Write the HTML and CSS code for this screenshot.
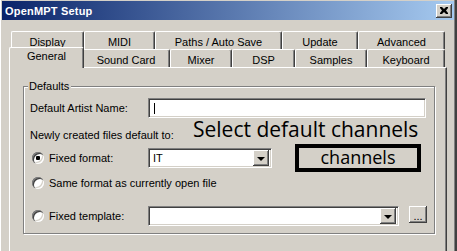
FILE: index.html
```html
<!DOCTYPE html>
<html lang="en">
<head>
    <meta charset="UTF-8">
    <title>OpenMPT Setup</title>
    <link rel="stylesheet" href="styles.css">
</head>
<body>
    <div class="window">
        <div class="titlebar">
            <span class="title">OpenMPT Setup</span>
            <div class="btn close">
                <svg width="8" height="7" viewBox="0 0 8 7"><path d="M0 0h2l2 2 2-2h2v1L6 3.5 8 6v1H6L4 5 2 7H0V6l2-2.5L0 1z" fill="#000"/></svg>
            </div>
        </div>

        <div class="tabs">
            <div class="tab-row">
                <div class="tab w-display">Display</div>
                <div class="tab w-midi">MIDI</div>
                <div class="tab w-paths">Paths / Auto Save</div>
                <div class="tab w-update">Update</div>
                <div class="tab w-advanced">Advanced</div>
            </div>
            <div class="tab-row">
                <div class="tab w-general active">General</div>
                <div class="tab w-sound">Sound Card</div>
                <div class="tab w-mixer">Mixer</div>
                <div class="tab w-dsp">DSP</div>
                <div class="tab w-samples">Samples</div>
                <div class="tab w-keyboard">Keyboard</div>
            </div>
        </div>

        <div class="panel">
            <fieldset class="group">
                <legend>Defaults</legend>

                <div class="row row-artist">
                    <span class="label">Default Artist Name:</span>
                    <div class="textbox artist"><span class="caret"></span></div>
                </div>

                <div class="row row-newly">
                    <span class="label">Newly created files default to:</span>
                    <span class="note">Select default channels</span>
                </div>

                <div class="row row-fixed">
                    <span class="label radio"><span class="radio-box checked"></span>Fixed format:</span>
                    <div class="textbox combo format">
                        <span class="combo-text">IT</span>
                        <div class="btn drop"><span class="arrow"></span></div>
                    </div>
                    <div class="callout">channels</div>
                </div>

                <div class="row row-same">
                    <span class="label radio wide"><span class="radio-box"></span>Same format as currently open file</span>
                </div>

                <div class="row row-template">
                    <span class="label radio"><span class="radio-box"></span>Fixed template:</span>
                    <div class="textbox combo template">
                        <span class="combo-text"></span>
                        <div class="btn drop"><span class="arrow"></span></div>
                    </div>
                    <div class="btn browse">...</div>
                </div>
            </fieldset>
        </div>
    </div>
</body>
</html>
```

FILE: styles.css
```css
:root {
    --face: #d4d0c8;
    --shadow: #808080;
    --dark: #404040;
    --light: #ffffff;
}

* {
    margin: 0;
    padding: 0;
    box-sizing: border-box;
}

body {
    background: var(--face);
    font-family: "Liberation Sans", Arial, sans-serif;
    font-size: 11px;
    color: #000;
    overflow: hidden;
}

.window {
    width: 457px;
    height: 251px;
    padding: 1px 3px 0 2px;
    background: var(--face);
    box-shadow: inset 1px 0 0 var(--light), inset -2px 0 0 var(--dark), inset -3px 0 0 var(--shadow);
    overflow: hidden;
}

/* raised 3D button */
.btn {
    display: flex;
    align-items: center;
    justify-content: center;
    flex-shrink: 0;
    background: var(--face);
    box-shadow: inset -1px -1px 0 var(--dark), inset 1px 1px 0 var(--light), inset -2px -2px 0 var(--shadow);
}

.titlebar {
    height: 19px;
    display: flex;
    align-items: center;
    justify-content: space-between;
    padding: 0 2px 0 3px;
    background: linear-gradient(to right, #0a246a, #a6caf0);
}

.title {
    color: #fff;
    font-weight: bold;
    font-size: 11px;
    letter-spacing: 0.2px;
}

.close {
    width: 16px;
    height: 14px;
}

.tabs {
    margin: 11px 0 0 9px;
}

.tab-row {
    display: flex;
    height: 18px;
}

.tab {
    height: 18px;
    border: 1px solid var(--light);
    border-right-color: var(--dark);
    border-bottom: none;
    border-radius: 2px 2px 0 0;
    box-shadow: inset -1px 0 0 var(--shadow);
    text-align: center;
    line-height: 20px;
    background: var(--face);
}

.tab.active {
    position: relative;
    z-index: 1;
    height: 21px;
    margin: -2px -2px 0 -2px;
    line-height: 17px;
}

.w-display { width: 73px; }
.w-midi { width: 71px; }
.w-paths { width: 127px; }
.w-update { width: 76px; }
.w-advanced { width: 87px; }
.w-general { width: 75px; }
.w-sound { width: 88px; }
.w-mixer { width: 62px; }
.w-dsp { width: 63px; }
.w-samples { width: 72px; }
.w-keyboard { width: 78px; }

.panel {
    margin-left: 7px;
    width: 438px;
    height: 200px;
    border-top: 1px solid var(--light);
    border-left: 1px solid var(--light);
    border-right: 1px solid var(--dark);
    box-shadow: inset -1px 0 0 var(--shadow);
}

.group {
    margin: 12px 0 0 13px;
    width: 412px;
    height: 154px;
    border: 1px solid var(--shadow);
    box-shadow: 1px 1px 0 var(--light), inset 1px 1px 0 var(--light);
    padding: 0 0 0 6px;
}

.group legend {
    margin-left: -2px;
    padding: 0 2px 0 1px;
    line-height: 13px;
    background: var(--face);
}

.row {
    display: flex;
    align-items: center;
}

.label {
    width: 118px;
    flex-shrink: 0;
    white-space: nowrap;
}

.radio {
    display: flex;
    align-items: center;
    margin-left: 2px;
    width: 116px;
}

.radio.wide {
    width: auto;
}

.radio-box {
    flex-shrink: 0;
    width: 12px;
    height: 12px;
    margin-right: 5px;
    border-radius: 50%;
    background: #fff;
    box-shadow: inset 1px 1px 0 var(--shadow), inset 2px 2px 0 var(--dark), inset -1px -1px 0 var(--light), inset -2px -2px 0 var(--face);
    display: flex;
    align-items: center;
    justify-content: center;
}

.radio-box.checked::after {
    content: "";
    width: 4px;
    height: 4px;
    border-radius: 1px;
    background: #000;
}

/* sunken field */
.textbox {
    height: 20px;
    background: #fff;
    border: 1px solid;
    border-color: var(--shadow) var(--light) var(--light) var(--shadow);
    box-shadow: inset 1px 1px 0 var(--dark), inset -1px -1px 0 var(--face);
    display: flex;
    align-items: center;
}

.row-artist {
    margin-top: 5px;
    height: 20px;
}

.artist {
    width: 278px;
}

.caret {
    width: 1px;
    height: 11px;
    margin-left: 5px;
    background: #000;
}

.row-newly {
    height: 30px;
    align-items: flex-start;
}

.row-newly .label {
    margin-top: 11px;
}

.note {
    margin: -3px 0 0 45px;
    font-family: "Open Sans", sans-serif;
    font-size: 21px;
    line-height: 28px;
    white-space: nowrap;
}

.row-fixed {
    height: 20px;
}

.combo {
    justify-content: space-between;
    padding: 2px;
}

.combo-text {
    padding-left: 2px;
}

.format {
    width: 124px;
}

.template {
    width: 251px;
}

.drop {
    width: 16px;
    height: 16px;
}

.arrow {
    width: 0;
    height: 0;
    border-left: 4px solid transparent;
    border-right: 4px solid transparent;
    border-top: 4px solid #000;
    margin-top: 1px;
}

.callout {
    margin-left: 23px;
    width: 126px;
    height: 28px;
    border: 4px solid #000;
    text-align: center;
    font-family: "Open Sans", sans-serif;
    font-size: 18px;
    line-height: 18px;
}

.row-same {
    height: 20px;
    margin-top: 5px;
}

.row-template {
    height: 20px;
    margin-top: 13px;
}

.browse {
    width: 18px;
    height: 17px;
    margin: 0 0 3px 10px;
    align-items: flex-end;
    padding-bottom: 3px;
    line-height: 8px;
}
```
